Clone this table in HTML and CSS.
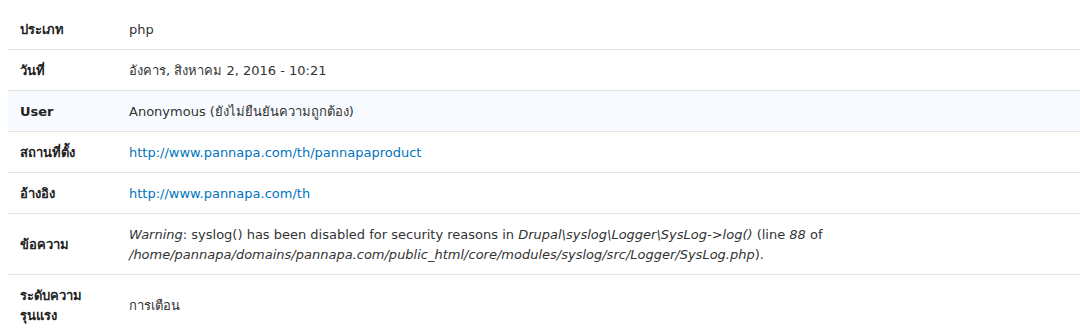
FILE: index.html
```html
<!DOCTYPE html>
<html lang="th">
<head>
<meta charset="utf-8">
<link rel="stylesheet" href="styles.css">
</head>
<body>
<table class="details">
  <tbody>
    <tr>
      <th>ประเภท</th>
      <td>php</td>
    </tr>
    <tr>
      <th>วันที่</th>
      <td>อังคาร, สิงหาคม 2, 2016 - 10:21</td>
    </tr>
    <tr class="hover">
      <th>User</th>
      <td>Anonymous (ยังไม่ยืนยันความถูกต้อง)</td>
    </tr>
    <tr>
      <th>สถานที่ตั้ง</th>
      <td><a href="#">http://www.pannapa.com/th/pannapaproduct</a></td>
    </tr>
    <tr>
      <th>อ้างอิง</th>
      <td><a href="#">http://www.pannapa.com/th</a></td>
    </tr>
    <tr>
      <th>ข้อความ</th>
      <td><em>Warning</em>: syslog() has been disabled for security reasons in <em>Drupal\syslog\Logger\SysLog-&gt;log()</em> (line <em>88</em> of<br><em>/home/pannapa/domains/pannapa.com/public_html/core/modules/syslog/src/Logger/SysLog.php</em>).</td>
    </tr>
    <tr>
      <th>ระดับความรุนแรง</th>
      <td>การเตือน</td>
    </tr>
  </tbody>
</table>
</body>
</html>
```

FILE: styles.css
```css
html, body {
  margin: 0;
  padding: 0;
  background: #ffffff;
}
body {
  padding: 9px 0 0 8px;
  font-family: "DejaVu Sans", "Noto Sans", "Liberation Sans", sans-serif;
  font-size: 13px;
  line-height: 20px;
  color: #333333;
}
.details {
  width: 1072px;
  border-collapse: collapse;
  border-spacing: 0;
}
.details tr {
  border-bottom: 1px solid #e4e2de;
}
.details tr.hover {
  background: #f7fbff;
}
.details th,
.details td {
  padding: 10px 12px;
  text-align: left;
  vertical-align: middle;
}
.details td {
  padding-top: 11px;
  padding-bottom: 9px;
}
.details th {
  width: 85px;
  font-weight: bold;
  color: #222222;
  padding-top: 11px;
  padding-bottom: 9px;
}
.details a {
  color: #0074bd;
  text-decoration: none;
}
.details em {
  font-style: italic;
}
```
